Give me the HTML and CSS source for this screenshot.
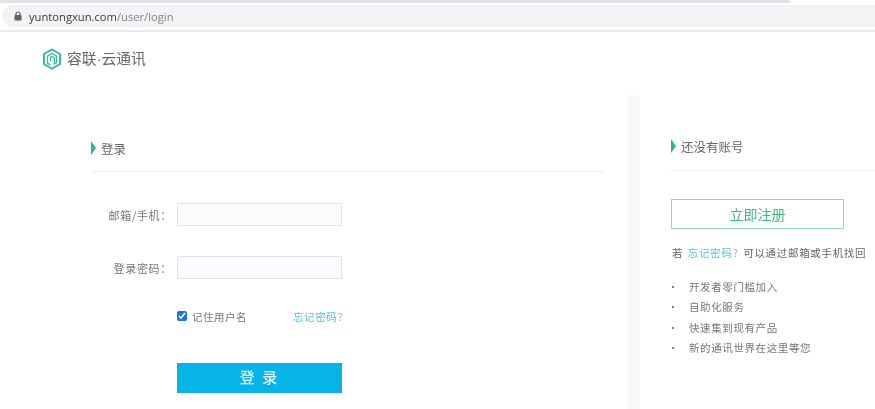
FILE: index.html
```html
<!DOCTYPE html>
<html lang="zh-CN">
<head>
<meta charset="utf-8">
<title>登录</title>
<link rel="stylesheet" href="styles.css">
</head>
<body>
<div class="tabstrip"></div>
<div class="toolbar">
  <div class="urlbar">
    <svg class="lock" width="8" height="10" viewBox="0 0 8 10"><path d="M2 4V3a2 2 0 0 1 4 0v1" fill="none" stroke="#5f6368" stroke-width="1.2"/><rect x="0.5" y="4" width="7" height="5.5" rx="1" fill="#5f6368"/></svg>
    <span class="host">yuntongxun.com</span><span class="path">/user/login</span>
  </div>
</div>
<header class="brand">
  <svg class="logo" width="20" height="22" viewBox="0 0 20 22"><path d="M10 1.500 18 6v10l-8 4.500L2 16V6z" fill="none" stroke="#3fb8a0" stroke-width="2"/><path d="M8.500 17 5.500 15.200V8.200L10 5.500l4.500 2.700v6.300l-2.200 1.300V9.800L10 8.500 8.500 9.400V13" fill="none" stroke="#3fb8a0" stroke-width="1.400"/></svg>
  <span class="brand-name">容联·云通讯</span>
</header>
<main class="content">
  <section class="login">
    <h2 class="title"><i class="marker"></i>登录</h2>
    <form class="form">
      <div class="row">
        <label class="label">邮箱/手机：</label>
        <input class="field" type="text">
      </div>
      <div class="row">
        <label class="label">登录密码：</label>
        <input class="field" type="text">
      </div>
      <div class="options">
        <label class="remember"><input class="check" type="checkbox" checked>记住用户名</label>
        <a class="link">忘记密码?</a>
      </div>
      <button class="submit" type="button">登 录</button>
    </form>
  </section>
  <aside class="side">
    <h2 class="title"><i class="marker"></i>还没有账号</h2>
    <a class="register">立即注册</a>
    <p class="hint">若 <a class="link">忘记密码?</a> 可以通过邮箱或手机找回</p>
    <ul class="perks">
      <li>开发者零门槛加入</li>
      <li>自助化服务</li>
      <li>快速集到现有产品</li>
      <li>新的通讯世界在这里等您</li>
    </ul>
  </aside>
</main>
</body>
</html>
```
FILE: styles.css
```css
* { box-sizing: border-box; }
html, body { margin: 0; height: 409px; overflow: hidden; background: #fff; }
body { font-family: "Noto Sans CJK SC", "Liberation Sans", sans-serif; color: #666; filter: blur(0.4px); }
.tabstrip { width: 790px; height: 3px; background: #dfe3e7; }
.toolbar { height: 29px; padding: 2px 0 0 2px; border-bottom: 2px solid #e8eaed; }
.urlbar { height: 22px; background: #f1f3f4; border-radius: 11px 0 0 11px; display: flex; align-items: center; padding-left: 12px; font-family: "Open Sans", "Liberation Sans", sans-serif; font-size: 11.200px; }
.lock { margin-right: 7px; }
.host { color: #3c4043; }
.path { color: #80868b; }
.brand { height: 63px; padding: 16px 0 0 42px; display: flex; align-items: flex-start; gap: 5px; }
.logo { flex: none; }
.brand-name { font-family: "Liberation Sans", "Noto Sans CJK SC", sans-serif; font-size: 14.800px; line-height: 22px; color: #666; }
.content { display: flex; align-items: flex-start; padding-left: 91px; }
.login { width: 514px; padding-top: 46px; flex: none; }
.title { margin: 0; height: 31px; display: flex; align-items: flex-start; gap: 5px; font-size: 12.500px; line-height: 15px; font-weight: 400; color: #666; border-bottom: 1px solid #f0f0f0; }
.marker { width: 0; height: 0; border-left: 5px solid #1fba98; border-top: 7px solid transparent; border-bottom: 7px solid transparent; }
.form { padding-top: 31px; }
.row { height: 23px; margin-bottom: 30px; display: flex; align-items: center; }
.label { width: 86px; padding-right: 5px; text-align: right; font-size: 11px; line-height: 14px; color: #777; letter-spacing: 0.700px; white-space: nowrap; }
.field { width: 165px; height: 23px; background: #fafbfc; border: 1px solid #dfe3ec; border-radius: 1px; padding: 0; }
.options { width: 166px; margin-left: 86px; margin-top: -2px; height: 18px; display: flex; justify-content: space-between; align-items: center; font-size: 10.500px; }
.remember { display: flex; align-items: center; color: #777; letter-spacing: 0.500px; white-space: nowrap; }
.check { width: 10px; height: 10px; margin: 0 5px 0 0; accent-color: #1a73e8; }
.link { color: #5bbde8; }
.options .link { letter-spacing: 0.600px; white-space: nowrap; }
.submit { display: block; width: 165px; height: 30px; margin: 38px 0 0 86px; padding: 0 0 3px; background: #06b4e8; border: 0; color: #e4f7fd; font-family: inherit; font-size: 15px; font-weight: 500; letter-spacing: 2px; }
.side { flex: 1; margin-left: 23px; height: 314px; padding: 44px 0 0 31px; border-left: 12px solid #fafafa; }
.side .title { width: 204px; height: 32px; }
.register { display: block; width: 173px; height: 30px; margin-top: 28px; border: 1px solid #90d8bd; text-align: center; font-size: 14px; line-height: 28px; color: #3fb97f; }
.hint { margin: 17px 0 0; padding-left: 1px; font-size: 10.500px; line-height: 14px; color: #666; letter-spacing: 0.680px; word-spacing: 1.500px; white-space: nowrap; }
.hint .link { letter-spacing: 0.800px; }
.perks { list-style: none; margin: 20px 0 0; padding: 0; font-size: 10.500px; color: #777; letter-spacing: 0.600px; }
.perks li { height: 20.300px; line-height: 14px; padding-left: 18px; position: relative; }
.perks li::before { content: ""; position: absolute; left: 1px; top: 6px; width: 2px; height: 2px; background: #555; border-radius: 50%; }
```
